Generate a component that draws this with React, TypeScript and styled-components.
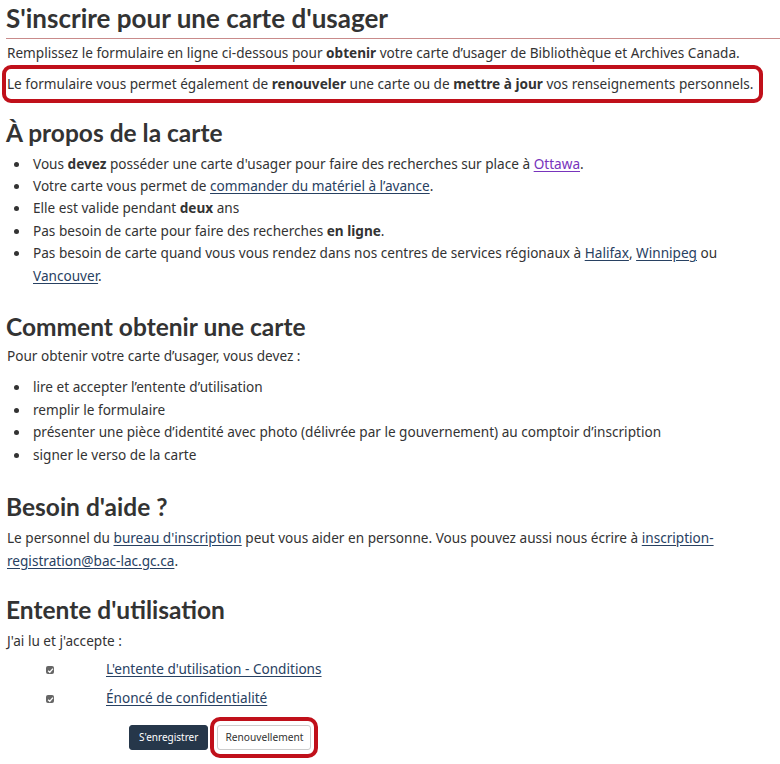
import React from "react";
import styled, { createGlobalStyle } from "styled-components";

const GlobalStyle = createGlobalStyle`
  html, body {
    margin: 0;
    padding: 0;
    background: #fff;
  }
  body {
    font-family: "Noto Sans", "Open Sans", sans-serif;
    font-size: 13.6px;
    color: #333;
  }
`;

const Page = styled.main`
  padding: 0 0 0 7px;
  width: 780px;
  box-sizing: border-box;
`;

const Title = styled.h1`
  font-family: Lato, "Noto Sans", sans-serif;
  font-weight: 700;
  font-size: 26px;
  line-height: 32px;
  color: #333;
  margin: 2px 0 0 -1px;
  padding-bottom: 4px;
  border-bottom: 1px solid #c98b8b;
`;

const Heading = styled.h2`
  font-family: Lato, "Noto Sans", sans-serif;
  font-weight: 700;
  font-size: 24.5px;
  line-height: 32px;
  color: #333;
  margin: 0 0 4px -1px;
`;

const Section = styled.section<{ $gap?: number }>`
  margin-top: ${({ $gap }) => $gap ?? 18}px;
`;

const Para = styled.p<{ $top?: number }>`
  margin: ${({ $top }) => $top ?? 0}px 0 0;
  line-height: 22.5px;
`;

const Callout = styled.div`
  margin: 0 0 0 -5px;
  width: 761px;
  box-sizing: border-box;
  border: 4px solid #c0101a;
  border-radius: 9px;
  padding: 4px 0 4px 1px;
  line-height: 22px;
  white-space: nowrap;
`;

const List = styled.ul<{ $top?: number }>`
  margin: ${({ $top }) => $top ?? 0}px 0 0;
  padding-left: 26px;
  list-style: none;
  line-height: 22.4px;
  li {
    position: relative;
  }
  li::before {
    content: "";
    position: absolute;
    left: -19px;
    top: 9px;
    width: 5px;
    height: 5px;
    border-radius: 50%;
    background: #333;
  }
`;

const Link = styled.a<{ $visited?: boolean }>`
  color: ${({ $visited }) => ($visited ? "#7834bc" : "#284162")};
  text-decoration: underline;
  text-underline-offset: 2px;
`;

const Agreement = styled.div`
  display: flex;
  flex-direction: column;
  gap: 7px;
  padding: 5px 0 0 39px;
`;

const CheckRow = styled.label`
  display: flex;
  align-items: center;
  gap: 52px;
  line-height: 22px;
`;

const Box = styled.span`
  width: 8px;
  height: 8px;
  border-radius: 2px;
  background: #666;
  display: inline-flex;
  align-items: center;
  justify-content: center;
  margin-top: 3px;
  flex: none;
`;

const Buttons = styled.div`
  display: flex;
  align-items: center;
  gap: 2px;
  padding: 8px 0 0 122px;
`;

const PrimaryButton = styled.button`
  font-family: "Noto Sans", sans-serif;
  font-size: 10px;
  background: #26374a;
  color: #fff;
  border: 1px solid #26374a;
  border-radius: 3px;
  height: 25px;
  padding: 0 9px;
`;

const Highlight = styled.div`
  border: 4px solid #c0101a;
  border-radius: 10px;
  padding: 4px 3px;
  display: flex;
`;

const DefaultButton = styled.button`
  font-family: "Noto Sans", sans-serif;
  font-size: 10.2px;
  background: #fff;
  color: #333;
  border: 1px solid #ccc;
  border-radius: 3px;
  height: 25px;
  padding: 0 7px;
`;

function Check() {
  return (
    <Box>
      <svg width="7" height="7" viewBox="0 0 8 8">
        <path d="M1.3 4.2 L3.2 6 L6.8 1.8" fill="none" stroke="#fff" strokeWidth="1.5" />
      </svg>
    </Box>
  );
}

export default function App() {
  return (
    <>
      <GlobalStyle />
      <Page>
        <Title>S'inscrire pour une carte d'usager</Title>
        <Para $top={3}>
          Remplissez le formulaire en ligne ci-dessous pour <b>obtenir</b> votre carte d’usager de
          Bibliothèque et Archives Canada.
        </Para>
        <Callout>
          Le formulaire vous permet également de <b>renouveler</b> une carte ou de <b>mettre à jour</b>{" "}
          vos renseignements personnels.
        </Callout>

        <Section $gap={14}>
          <Heading>À propos de la carte</Heading>
          <List>
            <li>
              Vous <b>devez</b> posséder une carte d'usager pour faire des recherches sur place à{" "}
              <Link $visited href="#">Ottawa</Link>.
            </li>
            <li>
              Votre carte vous permet de <Link href="#">commander du matériel à l’avance</Link>.
            </li>
            <li>
              Elle est valide pendant <b>deux</b> ans
            </li>
            <li>
              Pas besoin de carte pour faire des recherches <b>en ligne</b>.
            </li>
            <li>
              Pas besoin de carte quand vous vous rendez dans nos centres de services régionaux à{" "}
              <Link href="#">Halifax</Link>, <Link href="#">Winnipeg</Link> ou{" "}
              <Link href="#">Vancouver</Link>.
            </li>
          </List>
        </Section>

        <Section $gap={24}>
          <Heading>Comment obtenir une carte</Heading>
          <Para $top={-2}>Pour obtenir votre carte d’usager, vous devez :</Para>
          <List $top={9}>
            <li>lire et accepter l’entente d’utilisation</li>
            <li>remplir le formulaire</li>
            <li>
              présenter une pièce d’identité avec photo (délivrée par le gouvernement) au comptoir
              d’inscription
            </li>
            <li>signer le verso de la carte</li>
          </List>
        </Section>

        <Section $gap={25}>
          <Heading>Besoin d'aide ?</Heading>
          <Para $top={0}>
            Le personnel du <Link href="#">bureau d'inscription</Link> peut vous aider en personne.
            Vous pouvez aussi nous écrire à{" "}
            <Link href="#">inscription-registration@bac-lac.gc.ca</Link>.
          </Para>
        </Section>

        <Section $gap={22}>
          <Heading>Entente d'utilisation</Heading>
          <Para $top={2}>J'ai lu et j'accepte :</Para>
          <Agreement>
            <CheckRow>
              <Check />
              <Link href="#">L'entente d'utilisation - Conditions</Link>
            </CheckRow>
            <CheckRow>
              <Check />
              <Link href="#">Énoncé de confidentialité</Link>
            </CheckRow>
          </Agreement>
          <Buttons>
            <PrimaryButton>S'enregistrer</PrimaryButton>
            <Highlight>
              <DefaultButton>Renouvellement</DefaultButton>
            </Highlight>
          </Buttons>
        </Section>
      </Page>
    </>
  );
}
